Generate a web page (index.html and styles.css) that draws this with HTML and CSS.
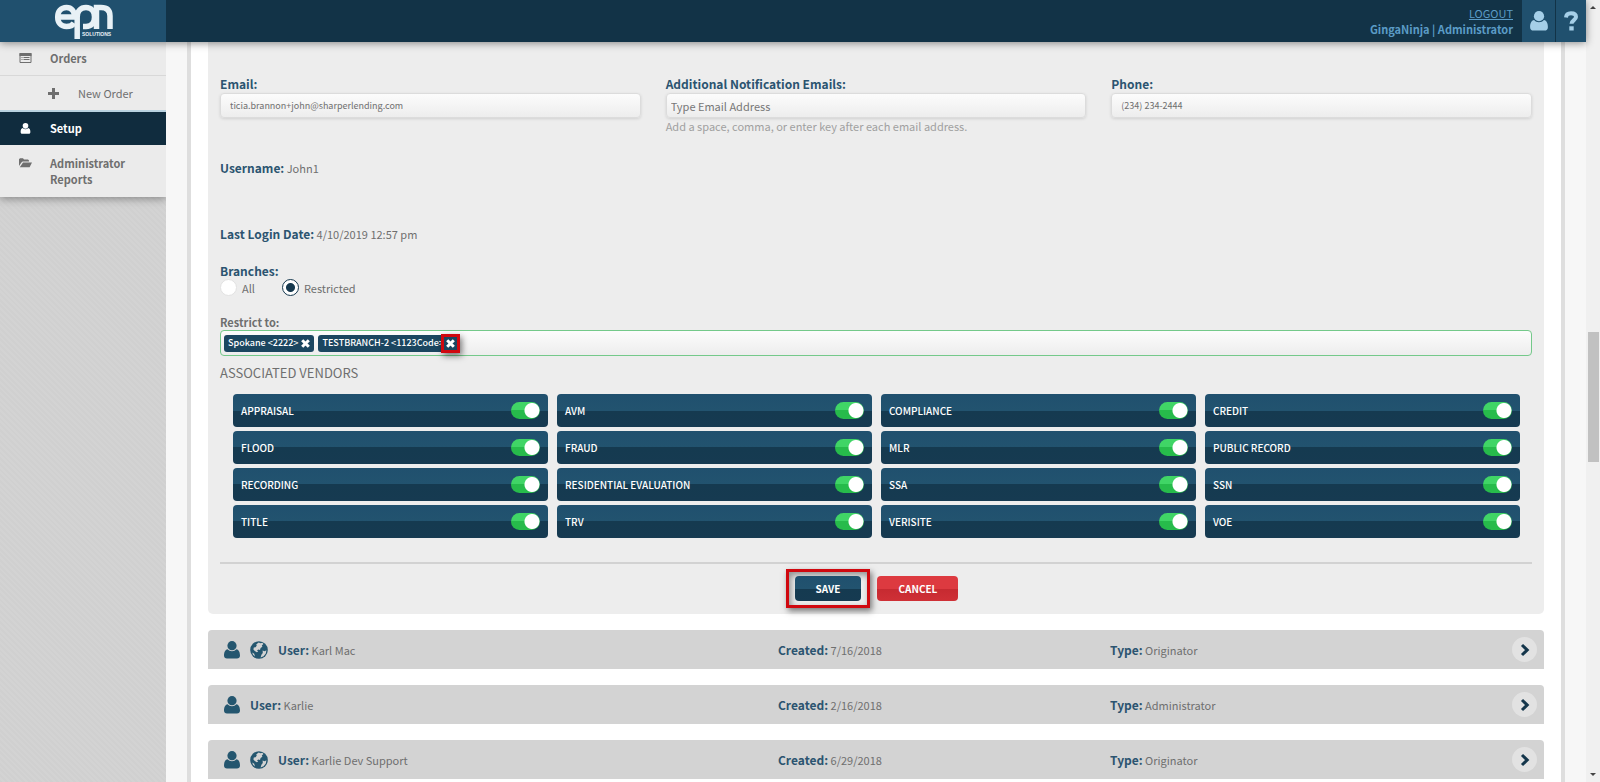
FILE: index.html
```html
<!DOCTYPE html>
<html lang="en">

<head>
  <meta charset="UTF-8">
  <meta name="viewport" content="width=device-width, initial-scale=1.0">
  <title>EPN Solutions - Setup</title>
  <link rel="stylesheet" href="styles.css">
</head>

<body>
  <svg class="defs" aria-hidden="true">
    <symbol id="i-user" viewBox="0 0 16 18">
      <circle cx="8" cy="4.7" r="4.6"/>
      <path d="M3.6 8.2C1 8.6 0 11.500 0 14.600C0 16.700 1.200 17.600 3 17.600H13C14.800 17.600 16 16.700 16 14.600C16 11.500 15 8.600 12.400 8.200C11.300 9.500 9.800 10.200 8 10.200S4.700 9.500 3.600 8.200Z"/>
    </symbol>
    <symbol id="i-globe" viewBox="0 0 18 18">
      <circle cx="9" cy="9" r="8.800"/>
      <path fill="#d3d3d3" d="M8.600 1.600L10.600 2.200L12.400 1.800L13.400 3L11.800 4.600L12.400 5.800L10.600 7L10 9L8.600 8.400L7 9.200L8.200 10.400L6.800 11.200L4.800 10L3.400 8.600L3.800 6.600L5.600 6.200L6.800 4.400L6.200 3.400Z"/>
      <path fill="#d3d3d3" d="M12.600 9.600L14.600 10.200L16.400 9.200L15.800 12.400L13.600 15.200L10.600 16.400L11.400 13.800L12.800 12Z"/>
      <path fill="#d3d3d3" d="M2.200 11.400L4.200 12.800L5 15.400L3 13.800Z"/>
    </symbol>
    <symbol id="i-right" viewBox="0 0 10 14">
      <path d="M2 2L7.200 7L2 12" fill="none" stroke="currentColor" stroke-width="3"/>
    </symbol>
  </svg>

  <div class="page">
    <header class="header">
      <a class="logo" href="#" aria-label="epn solutions">
        <svg width="70" height="38" viewBox="0 0 70 38">
          <g fill="none" stroke="currentColor" stroke-width="5.500">
            <path d="M5 15H20.500C20.500 9 17.500 5.500 12.500 5.500C7 5.500 3.700 9.500 3.700 15C3.700 21 7 24.500 12.500 24.500C16 24.500 18.500 23.500 20 21"/>
            <path d="M23.200 37V15C23.200 9 26.500 5.500 32 5.500C37.500 5.500 40.500 9.500 40.500 15C40.500 21 37.500 24.500 32 24.500H29"/>
            <path d="M42.500 27V5.500H47C53 5.500 56 8.500 56 14V27"/>
          </g>
          <text x="28" y="34" class="logo-text">SOLUTIONS</text>
        </svg>
      </a>
      <div class="account">
        <a class="logout" href="#">LOGOUT</a>
        <span class="who">GingaNinja | Administrator</span>
      </div>
      <button class="tile tile-user" aria-label="Account"><svg width="18" height="20"><use href="#i-user"/></svg></button>
      <button class="tile tile-help" aria-label="Help">
        <svg width="14" height="20" viewBox="0 0 14 20"><path d="M2 6.500C2.200 3.600 4 2.200 7 2.200C10 2.200 12 3.600 12 6C12 9 7.500 9.200 7.500 12.800" fill="none" stroke="currentColor" stroke-width="4"/><path d="M5.300 15.300H9.700V19.500H5.300Z"/></svg>
      </button>
    </header>

    <div class="body">
      <nav class="side">
        <ul class="menu">
          <li><a href="#">
            <svg width="12" height="10" viewBox="0 0 12 10"><path d="M.5 .5H11.500V9.500H.5Z" fill="none" stroke="currentColor"/><path d="M0 0H12V3H0ZM2 4H3V5H2ZM4 4H10V5H4ZM2 6H3V7H2ZM4 6H10V7H4Z"/></svg>
            <span>Orders</span></a></li>
          <li class="sub"><a href="#">
            <svg width="11" height="11" viewBox="0 0 11 11"><path d="M4 0H7V4H11V7H7V11H4V7H0V4H4Z"/></svg>
            <span>New Order</span></a></li>
          <li class="active"><a href="#">
            <svg width="12" height="11"><use href="#i-user"/></svg>
            <span>Setup</span></a></li>
          <li class="reports"><a href="#">
            <svg width="13" height="10" viewBox="0 0 13 10"><path d="M0 8V1.200L1 .3H4L5 1.500H9L10 2.500V3.600H3.600L2.400 4.400ZM4 4.600H13L10.600 9.200H.8Z"/></svg>
            <span>Administrator Reports</span></a></li>
        </ul>
      </nav>

      <main class="main">
        <div class="sheet">
          <form class="panel">
            <div class="fields">
              <div class="field">
                <label for="email">Email:</label>
                <input id="email" type="text" value="ticia.brannon+john@sharperlending.com">
              </div>
              <div class="field">
                <label for="extra">Additional Notification Emails:</label>
                <input id="extra" class="tag-input" type="text" placeholder="Type Email Address">
                <p class="hint">Add a space, comma, or enter key after each email address.</p>
              </div>
              <div class="field">
                <label for="phone">Phone:</label>
                <input id="phone" type="text" value="(234) 234-2444">
              </div>
            </div>

            <p class="info"><b>Username:</b> John1</p>
            <p class="info login"><b>Last Login Date:</b> 4/10/2019 12:57 pm</p>

            <fieldset class="branches">
              <legend>Branches:</legend>
              <label><input type="radio" name="branches">All</label>
              <label><input type="radio" name="branches" checked>Restricted</label>
            </fieldset>

            <label class="restrict" for="restrict">Restrict to:</label>
            <div class="tags">
              <span class="tag">Spokane &lt;2222&gt; <button type="button" aria-label="Remove Spokane"><svg width="9" height="9" viewBox="0 0 9 9"><path d="M1.200 1.200L7.800 7.800M7.800 1.200L1.200 7.800"/></svg></button></span>
              <span class="tag">TESTBRANCH-2 &lt;1123Code&gt; <button type="button" class="marked" aria-label="Remove TESTBRANCH-2"><svg width="9" height="9" viewBox="0 0 9 9"><path d="M1.200 1.200L7.800 7.800M7.800 1.200L1.200 7.800"/></svg></button></span>
              <input id="restrict" type="text">
            </div>

            <h2>ASSOCIATED VENDORS</h2>
            <div class="vendors">
              <label>APPRAISAL<input type="checkbox" checked></label>
              <label>AVM<input type="checkbox" checked></label>
              <label>COMPLIANCE<input type="checkbox" checked></label>
              <label>CREDIT<input type="checkbox" checked></label>
              <label>FLOOD<input type="checkbox" checked></label>
              <label>FRAUD<input type="checkbox" checked></label>
              <label>MLR<input type="checkbox" checked></label>
              <label>PUBLIC RECORD<input type="checkbox" checked></label>
              <label>RECORDING<input type="checkbox" checked></label>
              <label>RESIDENTIAL EVALUATION<input type="checkbox" checked></label>
              <label>SSA<input type="checkbox" checked></label>
              <label>SSN<input type="checkbox" checked></label>
              <label>TITLE<input type="checkbox" checked></label>
              <label>TRV<input type="checkbox" checked></label>
              <label>VERISITE<input type="checkbox" checked></label>
              <label>VOE<input type="checkbox" checked></label>
            </div>

            <div class="actions">
              <span class="save-box"><button type="button" class="btn">SAVE</button></span>
              <button type="button" class="btn cancel">CANCEL</button>
            </div>
          </form>

          <ul class="users">
            <li>
              <div class="name">
                <svg width="16" height="18"><use href="#i-user"/></svg>
                <svg width="18" height="18"><use href="#i-globe"/></svg>
                <p><b>User:</b> Karl Mac</p>
              </div>
              <p><b>Created:</b> 7/16/2018</p>
              <p><b>Type:</b> Originator</p>
              <button class="open" aria-label="Open"><svg width="10" height="14"><use href="#i-right"/></svg></button>
            </li>
            <li>
              <div class="name">
                <svg width="16" height="18"><use href="#i-user"/></svg>
                <p><b>User:</b> Karlie</p>
              </div>
              <p><b>Created:</b> 2/16/2018</p>
              <p><b>Type:</b> Administrator</p>
              <button class="open" aria-label="Open"><svg width="10" height="14"><use href="#i-right"/></svg></button>
            </li>
            <li>
              <div class="name">
                <svg width="16" height="18"><use href="#i-user"/></svg>
                <svg width="18" height="18"><use href="#i-globe"/></svg>
                <p><b>User:</b> Karlie Dev Support</p>
              </div>
              <p><b>Created:</b> 6/29/2018</p>
              <p><b>Type:</b> Originator</p>
              <button class="open" aria-label="Open"><svg width="10" height="14"><use href="#i-right"/></svg></button>
            </li>
          </ul>
        </div>
      </main>
    </div>
  </div>

  <div class="scroll">
    <i class="up"></i>
    <div class="track"><div class="thumb"></div></div>
    <i class="down"></i>
  </div>
</body>

</html>
```
FILE: styles.css
```css
* {
  margin: 0;
  padding: 0;
  box-sizing: border-box;
}

body {
  display: flex;
  height: 100vh;
  overflow: hidden;
  font: 11px/16px "Noto Sans CJK SC", "Noto Sans", sans-serif;
  color: #6f6f6f;
}

li {
  list-style: none;
}

a {
  color: inherit;
  text-decoration: none;
}

svg {
  display: block;
  flex: none;
  fill: currentColor;
}

button,
input {
  font: inherit;
  color: inherit;
  border: 0;
}

.defs {
  position: absolute;
  width: 0;
  height: 0;
}

.page {
  flex: 1;
  display: flex;
  flex-direction: column;
}

/* header */
.header {
  position: relative;
  z-index: 1;
  display: flex;
  flex: none;
  height: 42px;
  background: #123347;
  box-shadow: 0 1px 8px rgba(0, 0, 0, .45);
}

.logo {
  width: 166px;
  padding: 2px 0 0 54px;
  background: #20506e;
  color: #e8f1f6;
}

.logo-text {
  font: bold 5px "Liberation Sans", sans-serif;
}

.account {
  flex: 1;
  padding: 5px 9px 0 0;
  text-align: right;
  color: #5b9cc6;
}

.account > * {
  display: block;
}

.logout {
  text-decoration: underline;
}

.who {
  font-weight: bold;
}

.tile {
  display: flex;
  align-items: center;
  justify-content: center;
  background: #20506e;
  color: #a5cfe8;
}

.tile-user {
  width: 33px;
}

.tile-help {
  width: 31px;
  border-left: 1px solid #123347;
}

/* left menu */
.body {
  flex: 1;
  display: flex;
  min-height: 0;
}

.side {
  width: 166px;
  background: repeating-linear-gradient(45deg, #d0d0d0 0 2px, #d3d3d3 2px 4px);
}

.menu {
  background: #ebebeb;
  box-shadow: 0 2px 8px rgba(0, 0, 0, .35);
  font-weight: bold;
}

.menu a {
  display: flex;
  gap: 18px;
  padding: 8px 20px 9px 19px;
}

.menu svg {
  width: 13px;
  margin-top: 3px;
}

.menu .sub {
  border-top: 1px solid #d8d8d8;
  border-bottom: 2px solid #b9d2e0;
  font-weight: normal;
}

.menu .sub a {
  padding-left: 47px;
  padding-top: 9px;
}

.menu .active {
  background: #102c3e;
  color: #fff;
}

.menu .reports {
  padding: 2px 0 1px;
}

/* content */
.main {
  flex: 1;
  padding: 0 21px;
  background: #f7f7f7;
}

.sheet {
  height: 100%;
  padding: 0 17px;
  overflow: hidden;
  background: #fff;
  border: solid #dedede;
  border-width: 0 4px;
}

.panel {
  padding: 34px 12px 6px;
  background: #ededed;
  border-radius: 0 0 5px 5px;
}

b,
legend,
.field label {
  font-size: 12px;
  font-weight: bold;
  color: #2b5470;
}

.fields {
  display: grid;
  grid-template-columns: repeat(3, 1fr);
  gap: 25px;
}

.field label {
  display: block;
  height: 17px;
}

.field input {
  display: block;
  width: 100%;
  height: 25px;
  padding: 0 9px;
  font-size: 9px;
  background: linear-gradient(#fcfcfc, #ededed);
  border: 1px solid #dcdcdc;
  border-radius: 4px;
  box-shadow: 0 1px 3px rgba(0, 0, 0, .12);
}

.field .tag-input {
  padding: 0 4px;
  font-size: 11px;
}

.tag-input::placeholder {
  color: #777;
}

.hint {
  color: #a0a0a0;
}

.info {
  margin-top: 26px;
}

.login {
  margin-top: 50px;
}

.branches {
  display: flex;
  gap: 27px;
  margin-top: 21px;
  border: 0;
}

.branches label {
  display: flex;
  align-items: center;
  gap: 5px;
}

.branches input {
  appearance: none;
  width: 17px;
  height: 17px;
  background: #fff;
  border: 1px solid #e2e2e2;
  border-radius: 50%;
}

.branches input:checked {
  border-color: #16394f;
  background: radial-gradient(circle, #16394f 4px, #fff 5px);
}

.restrict {
  display: block;
  margin-top: 18px;
  font-weight: bold;
}

.tags {
  display: flex;
  align-items: center;
  gap: 4px;
  height: 26px;
  padding: 0 3px;
  background: linear-gradient(#fcfcfc, #ededed);
  border: 1px solid #74c98a;
  border-radius: 4px;
}

.tag {
  display: flex;
  align-items: center;
  gap: 3px;
  height: 17px;
  padding: 0 4px;
  font-size: 9px;
  font-weight: 500;
  color: #fff;
  background: #1b4660;
  border-radius: 3px;
}

.tag button {
  background: none;
}

.tag path {
  stroke: #fff;
  stroke-width: 3;
}

.tag .marked {
  margin: 0 -4px 0 -5px;
  padding: 4px;
  outline: 3px solid #d0080f;
  outline-offset: -2px;
  box-shadow: 2px 3px 6px 1px rgba(0, 0, 0, .5);
}

.tags input {
  flex: 1;
  background: none;
}

h2 {
  margin-top: 8px;
  font-size: 13px;
  line-height: 18px;
  font-weight: normal;
}

.vendors {
  display: grid;
  grid-template-columns: repeat(4, 1fr);
  gap: 4px 9px;
  margin: 12px 12px 24px 13px;
}

.vendors label,
.btn {
  color: #fff;
  background: linear-gradient(#20506e, #22536f 50%, #153a50 50%, #163a51);
  border-radius: 4px;
  font-size: 10px;
  font-weight: bold;
}

.vendors label {
  display: flex;
  align-items: center;
  justify-content: space-between;
  height: 33px;
  padding: 0 8px;
  font-weight: 500;
}

.vendors input {
  appearance: none;
  width: 29px;
  height: 17px;
  border-radius: 9px;
  background: radial-gradient(circle at 21px 50%, #fff 7px, transparent 8px), linear-gradient(#40d566 50%, #27bb4b 50%);
}

.actions {
  display: flex;
  justify-content: center;
  align-items: center;
  gap: 7px;
  padding: 5px 8px 0 0;
  border-top: 2px solid #d2d2d2;
}

.save-box {
  padding: 4px 6px;
  border: 3px solid #d0080f;
  box-shadow: 2px 3px 6px rgba(0, 0, 0, .5), inset 2px 3px 6px rgba(0, 0, 0, .4);
}

.btn {
  display: block;
  height: 25px;
  padding: 0 21px;
}

.cancel {
  background: linear-gradient(#dd3a40, #dd3a40 50%, #c62a31 50%, #cf3036);
}

/* user rows */
.users li {
  display: grid;
  grid-template-columns: 554px 332px 1fr 25px;
  align-items: center;
  height: 39px;
  margin-top: 16px;
  padding: 0 7px 0 16px;
  background: #d3d3d3;
  border-radius: 4px 4px 0 0;
}

.name {
  display: flex;
  align-items: center;
  gap: 10px;
  color: #24566f;
}

.name p {
  color: #6f6f6f;
}

.open {
  display: flex;
  align-items: center;
  justify-content: center;
  width: 25px;
  height: 25px;
  color: #14364b;
  background: #e2e2e2;
  border-radius: 50%;
}

/* page scrollbar */
.scroll {
  display: flex;
  flex-direction: column;
  align-items: center;
  justify-content: space-between;
  width: 14px;
  padding: 6px 0;
  background: #f0f0f0;
}

.track {
  flex: 1;
  width: 11px;
}

.thumb {
  height: 17%;
  margin-top: 323px;
  background: #c1c1c1;
}

.up,
.down {
  border: solid transparent;
  border-width: 0 3px;
}

.up {
  border-bottom: 3px solid #444;
}

.down {
  border-top: 3px solid #444;
}
```
